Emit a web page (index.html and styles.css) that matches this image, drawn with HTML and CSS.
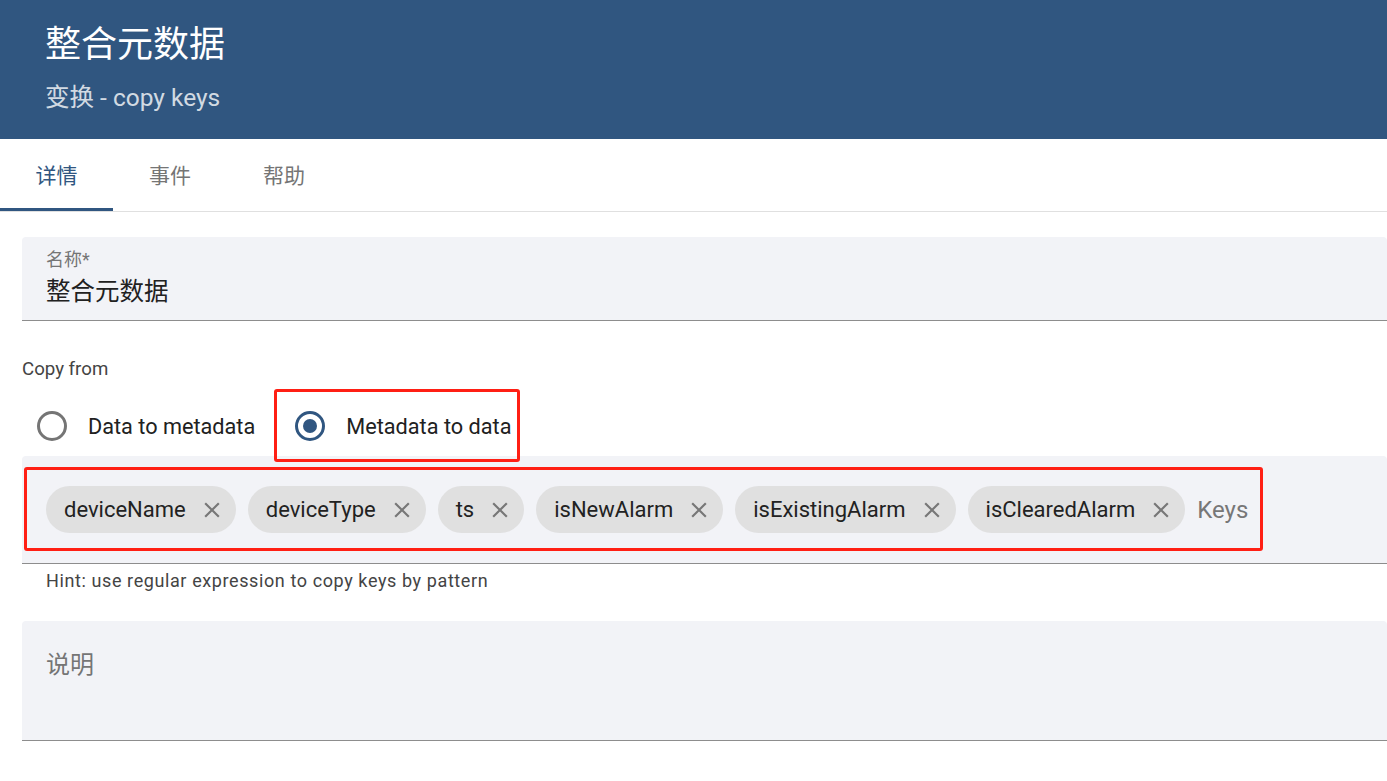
FILE: index.html
```html
<!DOCTYPE html>
<html lang="zh">
<head>
<meta charset="utf-8">
<title>整合元数据</title>
<link rel="stylesheet" href="styles.css">
</head>
<body>
<header class="hdr">
  <div class="hdr-title">整合元数据</div>
  <div class="hdr-sub">变换 - copy keys</div>
</header>
<nav class="tabs">
  <div class="tab active">详情</div>
  <div class="tab">事件</div>
  <div class="tab">帮助</div>
</nav>
<main class="content">
  <div class="field name-field">
    <div class="field-label">名称*</div>
    <div class="field-value">整合元数据</div>
  </div>
  <div class="section-label">Copy from</div>
  <div class="radio-group">
    <div class="radio"><span class="radio-circle"></span><span class="radio-text">Data to metadata</span></div>
    <div class="radio checked mark-a"><span class="radio-circle"></span><span class="radio-text">Metadata to data</span></div>
  </div>
  <div class="field keys-field">
    <div class="chip-list mark-b">
      <span class="chip"><span class="chip-text">deviceName</span><svg class="chip-x" viewBox="0 0 24 24"><path d="M19 6.41L17.59 5 12 10.59 6.41 5 5 6.41 10.59 12 5 17.59 6.41 19 12 13.41 17.59 19 19 17.59 13.41 12z"/></svg></span>
      <span class="chip"><span class="chip-text">deviceType</span><svg class="chip-x" viewBox="0 0 24 24"><path d="M19 6.41L17.59 5 12 10.59 6.41 5 5 6.41 10.59 12 5 17.59 6.41 19 12 13.41 17.59 19 19 17.59 13.41 12z"/></svg></span>
      <span class="chip"><span class="chip-text">ts</span><svg class="chip-x" viewBox="0 0 24 24"><path d="M19 6.41L17.59 5 12 10.59 6.41 5 5 6.41 10.59 12 5 17.59 6.41 19 12 13.41 17.59 19 19 17.59 13.41 12z"/></svg></span>
      <span class="chip"><span class="chip-text">isNewAlarm</span><svg class="chip-x" viewBox="0 0 24 24"><path d="M19 6.41L17.59 5 12 10.59 6.41 5 5 6.41 10.59 12 5 17.59 6.41 19 12 13.41 17.59 19 19 17.59 13.41 12z"/></svg></span>
      <span class="chip"><span class="chip-text">isExistingAlarm</span><svg class="chip-x" viewBox="0 0 24 24"><path d="M19 6.41L17.59 5 12 10.59 6.41 5 5 6.41 10.59 12 5 17.59 6.41 19 12 13.41 17.59 19 19 17.59 13.41 12z"/></svg></span>
      <span class="chip"><span class="chip-text">isClearedAlarm</span><svg class="chip-x" viewBox="0 0 24 24"><path d="M19 6.41L17.59 5 12 10.59 6.41 5 5 6.41 10.59 12 5 17.59 6.41 19 12 13.41 17.59 19 19 17.59 13.41 12z"/></svg></span>
      <span class="placeholder">Keys</span>
    </div>
  </div>
  <div class="hint">Hint: use regular expression to copy keys by pattern</div>
  <div class="field desc-field">
    <div class="desc-label">说明</div>
  </div>
</main>
</body>
</html>
```

FILE: styles.css
```css
* { box-sizing: border-box; }
html, body { margin: 0; padding: 0; background: #ffffff; }
body {
  font-family: Roboto, "Noto Sans CJK SC", sans-serif;
  color: #212121;
  width: 1387px;
  overflow: hidden;
}

.hdr {
  background: #305680;
  height: 139px;
  padding: 23px 45px 0;
  display: flex;
  flex-direction: column;
}
.hdr-title {
  color: #ffffff;
  font-size: 36px;
  line-height: 44px;
}
.hdr-sub {
  margin-top: 16px;
  color: rgba(255, 255, 255, 0.8);
  font-size: 24.5px;
  line-height: 30px;
}

.tabs {
  display: flex;
  height: 73px;
  border-bottom: 1px solid #e0e0e0;
}
.tab {
  width: 114px;
  display: flex;
  align-items: center;
  justify-content: center;
  font-size: 21px;
  color: #757575;
  padding-top: 1px;
  border-bottom: 3px solid transparent;
}
.tab.active {
  width: 113px;
  color: #305680;
  border-bottom-color: #305680;
}

.content {
  padding-left: 22px;
}

.field {
  background: #f2f3f7;
  border-radius: 4px 4px 0 0;
  border-bottom: 1px solid #8d8d8d;
}
.name-field {
  margin-top: 25px;
  height: 84px;
  padding: 12px 24px 0;
}
.field-label {
  font-size: 18px;
  line-height: 22px;
  color: #757575;
}
.field-value {
  margin-top: 5px;
  font-size: 24.5px;
  line-height: 32px;
  color: #212121;
}

.section-label {
  margin-top: 38px;
  font-size: 18.67px;
  line-height: 20px;
  color: #444;
}

.radio-group {
  margin-top: 23px;
  display: flex;
  gap: 25px;
}
.radio {
  position: relative;
  display: flex;
  align-items: center;
  height: 48px;
  padding-left: 15px;
  font-size: 21.7px;
  color: #212121;
}
.radio-circle {
  width: 30px;
  height: 30px;
  border-radius: 50%;
  border: 3px solid #757575;
  margin-right: 21px;
  display: flex;
  align-items: center;
  justify-content: center;
}
.radio.checked .radio-circle {
  border-color: #305680;
}
.radio.checked .radio-circle::before {
  content: "";
  width: 14px;
  height: 14px;
  border-radius: 50%;
  background: #305680;
}
.mark-a::after {
  content: "";
  position: absolute;
  left: -6px;
  right: -9px;
  top: -13px;
  bottom: -12px;
  border: 3px solid #ff1f14;
  border-radius: 3px;
  pointer-events: none;
}

.keys-field {
  margin-top: 6px;
  height: 108px;
  padding: 30px 24px 0;
}
.chip-list {
  position: relative;
  display: inline-flex;
  align-items: center;
  gap: 12px;
}
.chip {
  display: inline-flex;
  align-items: center;
  height: 47px;
  border-radius: 24px;
  background: #e0e0e0;
  padding: 0 11px 0 18px;
  font-size: 22px;
  color: #222;
}
.chip-x {
  width: 26px;
  height: 26px;
  margin-left: 13px;
  fill: #777;
}
.placeholder {
  margin-left: 0;
  font-size: 24px;
  color: #777;
}
.mark-b::after {
  content: "";
  position: absolute;
  left: -22px;
  right: -15px;
  top: -19px;
  bottom: -18px;
  border: 3px solid #ff1f14;
  border-radius: 3px;
  pointer-events: none;
}

.hint {
  margin-top: 7px;
  padding-left: 24px;
  font-size: 18px;
  letter-spacing: 0.6px;
  line-height: 20px;
  color: #444;
}

.desc-field {
  margin-top: 30px;
  height: 120px;
  padding: 29px 24px 0;
}
.desc-label {
  font-size: 24px;
  line-height: 30px;
  color: #757575;
}
```
